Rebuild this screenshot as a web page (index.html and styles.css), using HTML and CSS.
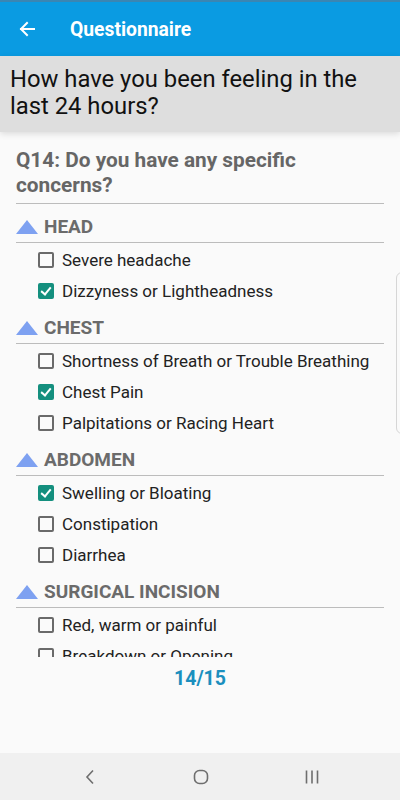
FILE: index.html
```html
<!DOCTYPE html>
<html>
<head>
<meta charset="utf-8">
<link rel="stylesheet" href="styles.css">
</head>
<body>
<div class="screen">
  <header class="appbar">
    <svg class="back" width="16" height="16" viewBox="0 0 16 16"><path d="M15 8H2M8 2L2 8l6 6" fill="none" stroke="#fff" stroke-width="2" stroke-linecap="square"/></svg>
    <span class="title">Questionnaire</span>
  </header>
  <div class="prompt">How have you been feeling in the last 24 hours?</div>
  <main class="scroll">
    <h2 class="question">Q14: Do you have any specific concerns?</h2>
    <section class="group">
      <div class="group-head"><svg class="tri" width="22" height="14" viewBox="0 0 22 14"><path d="M11 0L22 14H0Z" fill="#7ea1f1"/></svg>HEAD</div>
      <ul class="items">
        <li><span class="box"></span>Severe headache</li>
        <li><span class="box on"></span>Dizzyness or Lightheadness</li>
      </ul>
    </section>
    <section class="group">
      <div class="group-head"><svg class="tri" width="22" height="14" viewBox="0 0 22 14"><path d="M11 0L22 14H0Z" fill="#7ea1f1"/></svg>CHEST</div>
      <ul class="items">
        <li><span class="box"></span>Shortness of Breath or Trouble Breathing</li>
        <li><span class="box on"></span>Chest Pain</li>
        <li><span class="box"></span>Palpitations or Racing Heart</li>
      </ul>
    </section>
    <section class="group">
      <div class="group-head"><svg class="tri" width="22" height="14" viewBox="0 0 22 14"><path d="M11 0L22 14H0Z" fill="#7ea1f1"/></svg>ABDOMEN</div>
      <ul class="items">
        <li><span class="box on"></span>Swelling or Bloating</li>
        <li><span class="box"></span>Constipation</li>
        <li><span class="box"></span>Diarrhea</li>
      </ul>
    </section>
    <section class="group">
      <div class="group-head"><svg class="tri" width="22" height="14" viewBox="0 0 22 14"><path d="M11 0L22 14H0Z" fill="#7ea1f1"/></svg>SURGICAL INCISION</div>
      <ul class="items">
        <li><span class="box"></span>Red, warm or painful</li>
        <li><span class="box"></span>Breakdown or Opening</li>
      </ul>
    </section>
    <div class="edge"></div>
  </main>
  <div class="pager">14/15</div>
  <div class="spacer"></div>
  <nav class="navbar">
    <svg width="16" height="16" viewBox="0 0 16 16"><path d="M11 1.5L5 8l6 6.5" fill="none" stroke="#6e6e6e" stroke-width="1.6"/></svg>
    <svg width="16" height="16" viewBox="0 0 16 16"><rect x="1.5" y="1.5" width="13" height="13" rx="5" fill="none" stroke="#6e6e6e" stroke-width="1.6"/></svg>
    <svg width="16" height="16" viewBox="0 0 16 16"><path d="M2.5 1.5v13M8 1.5v13M13.5 1.5v13" stroke="#6e6e6e" stroke-width="1.6"/></svg>
  </nav>
</div>
</body>
</html>
```
FILE: styles.css
```css
* { box-sizing: border-box; }
html, body { margin: 0; padding: 0; }
body {
  background: #fafafa;
  font-family: Roboto, "Noto Sans", sans-serif;
  color: #1e1e1e;
}
.screen {
  width: 400px;
  height: 800px;
  display: flex;
  flex-direction: column;
  overflow: hidden;
}
.appbar {
  height: 56px;
  flex: none;
  background: #0a9be2;
  border-top: 2px solid #3a86b3;
  display: flex;
  align-items: center;
  padding-left: 19px;
}
.back { margin-right: 35px; }
.title {
  color: #fff;
  font-weight: 700;
  font-size: 19.3px;
}
.prompt {
  flex: none;
  height: 76px;
  background: #dedede;
  padding: 10px 10px 0;
  font-size: 23.8px;
  line-height: 27px;
  color: #111;
  box-shadow: 0 2px 6px rgba(0,0,0,0.12);
  position: relative;
  z-index: 1;
}
.scroll {
  flex: none;
  height: 525px;
  overflow: hidden;
  padding: 16px 16px 0;
  position: relative;
}
.question {
  margin: 0;
  font-size: 20.8px;
  line-height: 25px;
  font-weight: 700;
  color: #666;
  padding-bottom: 5px;
  border-bottom: 1px solid #bcbcbc;
  margin-bottom: 1px;
}
.group-head {
  display: flex;
  align-items: center;
  padding: 11px 0 5px;
  line-height: 21px;
  font-size: 19px;
  font-weight: 700;
  color: #6b6b6b;
  border-bottom: 1px solid #bcbcbc;
}
.tri { margin-right: 6px; }
.items {
  list-style: none;
  margin: 0;
  padding: 1px 0 0 22px;
}
.items li {
  display: flex;
  align-items: center;
  height: 31px;
  font-size: 17px;
  color: #222;
}
.box {
  width: 16px;
  height: 16px;
  border: 2px solid #6a6a6a;
  border-radius: 2px;
  margin-right: 8px;
  flex: none;
  position: relative;
}
.box.on {
  background: #148f7e;
  border-color: #148f7e;
}
.box.on::after {
  content: "";
  position: absolute;
  left: 3px;
  top: 0px;
  width: 4px;
  height: 8px;
  border-right: 2px solid #fff;
  border-bottom: 2px solid #fff;
  transform: rotate(40deg);
}
.edge {
  position: absolute;
  right: -8px;
  top: 140px;
  width: 12px;
  height: 162px;
  border: 1px solid #d6d6d6;
  border-radius: 8px;
}
.pager {
  flex: none;
  height: 42px;
  display: flex;
  align-items: center;
  justify-content: center;
  font-size: 19.5px;
  font-weight: 700;
  color: #1b8fbe;
}
.spacer { flex: 1; }
.navbar {
  flex: none;
  height: 47px;
  background: #f0f0f0;
  display: flex;
  align-items: center;
  gap: 95px;
  padding-left: 82px;
}
```
